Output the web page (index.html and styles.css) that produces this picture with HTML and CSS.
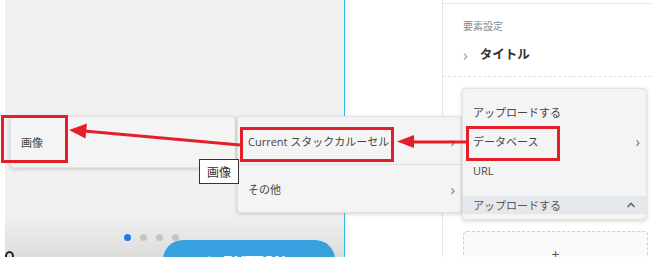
FILE: index.html
```html
<!DOCTYPE html>
<html lang="ja">
<head>
  <meta charset="UTF-8">
  <meta name="viewport" content="width=device-width, initial-scale=1.0">
  <title>画像メニュー</title>
  <link rel="stylesheet" href="styles.css">
</head>
<body>
  <div class="app">
    <div class="canvas">
      <div class="canvas-fill"></div>
      <div class="pager">
        <span class="dot active"></span>
        <span class="dot"></span>
        <span class="dot"></span>
        <span class="dot"></span>
      </div>
      <div class="cta">
        <span class="cta-icon">+</span>
        <span>BUTTON</span>
      </div>
      <span class="corner-icon"></span>
    </div>
    <div class="gutter"></div>
    <div class="panel">
      <div class="panel-top"></div>
      <div class="panel-section">
        <div class="section-label">要素設定</div>
        <div class="section-title">
          <span class="chev">&#8250;</span>
          <span>タイトル</span>
        </div>
      </div>
      <div class="drop-zone">
        <span class="plus">+</span>
      </div>
    </div>
  </div>

  <!-- コンテキストメニュー -->
  <div class="menu menu-image">
    <div class="menu-item">画像</div>
  </div>

  <div class="menu menu-source">
    <div class="menu-item tall">
      <span>Current スタックカルーセル</span>
      <span class="chev">&#8250;</span>
    </div>
    <div class="menu-sep"></div>
    <div class="menu-item tall">
      <span>その他</span>
      <span class="chev">&#8250;</span>
    </div>
  </div>

  <div class="menu menu-upload">
    <div class="menu-item">アップロードする</div>
    <div class="menu-item">
      <span>データベース</span>
      <span class="chev">&#8250;</span>
    </div>
    <div class="menu-item">URL</div>
    <div class="menu-band">
      <span>アップロードする</span>
      <svg class="caret" width="10" height="6" viewBox="0 0 10 6">
        <path d="M1.5 5 L5 1.5 L8.5 5" fill="none" stroke="#666" stroke-width="1.6"></path>
      </svg>
    </div>
  </div>

  <div class="tooltip">画像</div>

  <svg class="marks" width="652" height="257" viewBox="0 0 652 257">
    <g fill="none" stroke="#e3202a" stroke-width="3">
      <rect x="2.5" y="116.5" width="64" height="45"></rect>
      <rect x="241.5" y="128.5" width="151" height="32"></rect>
      <rect x="467.5" y="127.5" width="91" height="32"></rect>
      <line x1="466" y1="142" x2="410" y2="142"></line>
      <line x1="240" y1="145" x2="84" y2="131"></line>
    </g>
    <g fill="#e3202a">
      <polygon points="397,141.5 414,135 414,148"></polygon>
      <polygon points="69,130 87,123.5 85.5,138.5"></polygon>
    </g>
  </svg>
</body>
</html>
```

FILE: styles.css
```css
html, body {
  margin: 0;
  padding: 0;
}
body {
  width: 652px;
  height: 257px;
  overflow: hidden;
  position: relative;
  background: #fff;
  font-family: "Open Sans", "Noto Sans CJK JP", sans-serif;
  color: #444;
}
.app {
  display: flex;
  height: 257px;
}
.canvas {
  width: 339px;
  margin-left: 5px;
  border-right: 1px solid #2fc3e4;
  background: linear-gradient(to bottom, #f1f1f1 0, #f1f1f1 214px, #dcdcdc 257px);
  display: flex;
  flex-direction: column;
  position: relative;
}
.canvas-fill {
  flex: 1;
}
.pager {
  display: flex;
  gap: 9px;
  margin-left: 119px;
  height: 7px;
  margin-bottom: -1px;
  position: relative;
  z-index: 1;
}
.dot {
  width: 7px;
  height: 7px;
  border-radius: 50%;
  background: #c6c6c6;
}
.dot.active {
  background: #1a7de6;
}
.cta {
  margin-left: 158px;
  width: 172px;
  height: 34px;
  margin-bottom: -17px;
  border-radius: 20px 20px 0 0;
  background: #36a1de;
  color: #fff;
  font-family: "Liberation Sans", sans-serif;
  font-weight: bold;
  font-size: 15px;
  line-height: 17px;
  display: flex;
  align-items: flex-start;
  padding-top: 12px;
  padding-left: 42px;
  box-sizing: border-box;
  gap: 10px;
}
.cta-icon {
  font-size: 14px;
}
.corner-icon {
  position: absolute;
  left: 0;
  bottom: -5px;
  width: 5px;
  height: 7px;
  border: 2px solid #222;
  border-radius: 50%;
}
.gutter {
  width: 97px;
}
.panel {
  flex: 1;
  border-left: 1px solid #e3e7ec;
  position: relative;
}
.panel-top {
  height: 3px;
  border-bottom: 1px solid #e6eaee;
}
.panel-section {
  padding: 15px 0 0 20px;
  height: 57px;
  border-bottom: 1px dashed #dfe3e8;
  box-sizing: content-box;
}
.section-label {
  font-size: 10px;
  color: #8a8a8a;
  line-height: 14px;
}
.section-title {
  margin-top: 13px;
  display: flex;
  align-items: center;
  gap: 12px;
  font-size: 12.5px;
  font-weight: bold;
  color: #333;
  line-height: 18px;
}
.section-title .chev {
  color: #999;
  font-weight: normal;
  font-size: 16px;
}
.drop-zone {
  margin: 154px 0 0 20px;
  width: 183px;
  height: 40px;
  border: 1px dashed #cfcfcf;
  border-radius: 4px;
  background: #fafafa;
  display: flex;
  justify-content: center;
}
.plus {
  margin-top: 15px;
  font-size: 14px;
  line-height: 16px;
  color: #555;
}
.menu {
  position: absolute;
  background: #f4f4f4;
  border: 1px solid #e2e2e2;
  border-radius: 4px;
  box-shadow: 0 1px 4px rgba(0, 0, 0, 0.18);
  box-sizing: border-box;
  font-size: 11px;
}
.menu-item {
  height: 30px;
  display: flex;
  align-items: center;
  justify-content: space-between;
  padding: 0 6px 0 10px;
}
.menu-item .chev {
  font-size: 15px;
  color: #777;
}
.menu-image {
  left: 10px;
  top: 116px;
  width: 226px;
  height: 52px;
}
.menu-image .menu-item {
  height: 50px;
}
.menu-source {
  left: 237px;
  top: 116px;
  width: 225px;
  height: 97px;
}
.menu-item.tall {
  height: 47px;
}
.menu-sep {
  height: 1px;
  background: #dedede;
}
.menu-upload {
  left: 462px;
  top: 88px;
  width: 185px;
  height: 132px;
  padding-top: 8px;
  z-index: 2;
}
.menu-upload .menu-item {
  height: 29.5px;
  padding-right: 6px;
}
.menu-band {
  margin-top: 10px;
  height: 18px;
  background: #e4e8ec;
  display: flex;
  align-items: center;
  justify-content: space-between;
  padding: 0 10px;
  color: #555;
}
.tooltip {
  position: absolute;
  left: 199px;
  top: 159px;
  width: 40px;
  height: 25px;
  box-sizing: border-box;
  border: 1px solid #333;
  background: #fff;
  font-size: 12px;
  color: #333;
  display: flex;
  align-items: center;
  justify-content: center;
  z-index: 3;
}
.marks {
  position: absolute;
  left: 0;
  top: 0;
  pointer-events: none;
  z-index: 4;
}
```
